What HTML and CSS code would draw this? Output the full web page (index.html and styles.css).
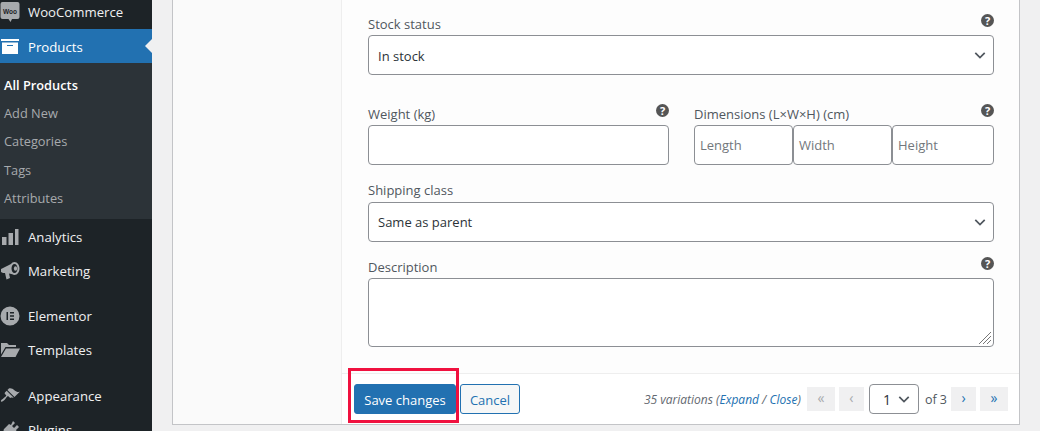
FILE: index.html
```html
<!DOCTYPE html>
<html lang="en">
<head>
    <meta charset="UTF-8">
    <title>Edit product</title>
    <link rel="stylesheet" href="styles.css">
</head>
<body>
    <nav class="sidebar">
        <a class="menu-item woo">
            <svg class="menu-icon" viewBox="0 0 20 20"><path fill="#a7aaad" d="M2.500 0h15a2 2 0 0 1 2 2v13a2 2 0 0 1-2 2H12l-1.500 3-2-3h-6a2 2 0 0 1-2-2V2a2 2 0 0 1 2-2z"/><text class="woo-mark" x="10" y="11.500">Woo</text></svg>
            <span>WooCommerce</span>
        </a>
        <a class="menu-item current">
            <svg class="menu-icon" viewBox="0 0 20 20"><path fill="#fff" fill-rule="evenodd" d="M1 2h18v2H1zM2 5.500h16V17H2zM7 8v1h6V8z"/></svg>
            <span>Products</span>
        </a>
        <ul class="submenu">
            <li class="active">All Products</li>
            <li>Add New</li>
            <li>Categories</li>
            <li>Tags</li>
            <li>Attributes</li>
        </ul>
        <a class="menu-item">
            <svg class="menu-icon" viewBox="0 0 20 20"><path fill="#a7aaad" d="M2 10h4.500v8H2zM8.500 6H13v12H8.500zM15 2h3.500v16H15z"/></svg>
            <span>Analytics</span>
        </a>
        <a class="menu-item">
            <svg class="menu-icon" viewBox="0 0 20 20"><path fill="#a7aaad" fill-rule="evenodd" d="M1 8l10-5c.8-1.300 2-2 3.500-2C17.500 1 19.500 4 19.500 7.500S17.500 14 14.500 14c-.8 0-1.600-.2-2.200-.7L9 12.500l1 4.500-3.500 1.500L5 12H3l-2-1zM14.500 3c-1.700 0-3 2-3 4.500S12.800 12 14.500 12s3-2 3-4.500S16.200 3 14.500 3z"/><ellipse cx="15.500" cy="7.500" rx="1.600" ry="2.200" fill="#a7aaad"/></svg>
            <span>Marketing</span>
        </a>
        <a class="menu-item gap">
            <svg class="menu-icon" viewBox="0 0 20 20"><path fill="#a7aaad" fill-rule="evenodd" d="M10 .5a9.500 9.500 0 1 1 0 19 9.500 9.500 0 0 1 0-19zM6.500 6v8H8V6zm3.500 0v1.500h4V6zm0 3.250v1.500h4v-1.500zm0 3.250V14h4v-1.500z"/></svg>
            <span>Elementor</span>
        </a>
        <a class="menu-item">
            <svg class="menu-icon" viewBox="0 0 20 20"><path fill="#a7aaad" d="M1 3h6l2 2h7v2H5.500L1 14.500zM6 8.500h14L15.500 17H1z"/></svg>
            <span>Templates</span>
        </a>
        <a class="menu-item gap">
            <svg class="menu-icon" viewBox="0 0 20 20"><path fill="#a7aaad" d="M14.480 11.060L7.410 3.990l1.500-1.500c.5-.56 2.300-.47 3.510.32 1.210.8 1.430 1.280 2.910 2.100 1.180.64 2.450 1.260 4.450.85zm-.71.71L6.700 4.700 4.930 6.470c-.39.39-.39 1.020 0 1.410l1.060 1.060c.39.39.39 1.030 0 1.420-.6.6-1.430 1.110-2.210 1.690-.35.260-.7.530-1.010.84C1.430 13.230.4 14.750 1.100 15.450c.71.7 2.220-.33 3.560-1.670.31-.31.58-.66.85-1.020.57-.78 1.080-1.610 1.690-2.210.39-.39 1.020-.39 1.410 0l1.060 1.060c.39.39 1.020.39 1.410 0z"/></svg>
            <span>Appearance</span>
        </a>
        <a class="menu-item">
            <svg class="menu-icon" viewBox="0 0 20 20"><path fill="#a7aaad" d="M13 1l2 2-3 3 2 2 3-3 2 2-3 3 1 2-5 5c-2 1-4 0-5-1l-3 3-2-2 3-3c-1-1-2-3-1-5l5-5 2 1z"/></svg>
            <span>Plugins</span>
        </a>
    </nav>

    <main class="content">
        <section class="panel">
            <div class="tabs"></div>
            <div class="panel-main">
                <div class="variation">
                    <div class="field stock">
                        <div class="field-head"><label>Stock status</label><span class="help">?</span></div>
                        <div class="select-box"><span>In stock</span><svg class="chevron" viewBox="0 0 14 8"><path d="M1.500 1l5.500 5.500L12.500 1"/></svg></div>
                    </div>
                    <div class="field-row">
                        <div class="field">
                            <div class="field-head"><label>Weight (kg)</label><span class="help">?</span></div>
                            <div class="text-box"></div>
                        </div>
                        <div class="field">
                            <div class="field-head"><label>Dimensions (L×W×H) (cm)</label><span class="help">?</span></div>
                            <div class="dims">
                                <div class="text-box">Length</div>
                                <div class="text-box">Width</div>
                                <div class="text-box">Height</div>
                            </div>
                        </div>
                    </div>
                    <div class="field shipping">
                        <div class="field-head"><label>Shipping class</label></div>
                        <div class="select-box"><span>Same as parent</span><svg class="chevron" viewBox="0 0 14 8"><path d="M1.500 1l5.500 5.500L12.500 1"/></svg></div>
                    </div>
                    <div class="field description">
                        <div class="field-head"><label>Description</label><span class="help">?</span></div>
                        <div class="text-area">
                            <svg class="grip" viewBox="0 0 14 14"><path d="M1 13L13 1M5 13l8-8M9 13l4-4"/></svg>
                        </div>
                    </div>
                </div>
                <div class="toolbar">
                    <button class="btn-save">Save changes</button>
                    <button class="btn-cancel">Cancel</button>
                    <div class="paging">
                        <em class="count">35 variations (<a>Expand</a> / <a>Close</a>)</em>
                        <span class="page-btn off">«</span>
                        <span class="page-btn off narrow">‹</span>
                        <div class="page-select"><span>1</span><svg class="chevron" viewBox="0 0 14 8"><path d="M1.500 1l5.500 5.500L12.500 1"/></svg></div>
                        <span class="of">of 3</span>
                        <span class="page-btn narrow">›</span>
                        <span class="page-btn">»</span>
                    </div>
                </div>
            </div>
        </section>
    </main>
    <div class="highlight"></div>
</body>
</html>
```

FILE: styles.css
```css
* {
    box-sizing: border-box;
}
html, body {
    height: 431px;
    overflow: hidden;
}
body {
    margin: 0;
    display: flex;
    background: #f0f0f1;
    color: #50575e;
    font-family: "Open Sans", sans-serif;
    font-size: 13px;
    position: relative;
}

/* sidebar */
.sidebar {
    width: 152px;
    flex: none;
    height: 431px;
    overflow: hidden;
    background: #1d2327;
    color: #f0f0f1;
}
.menu-item {
    display: flex;
    align-items: center;
    height: 34px;
    padding-top: 1px;
    font-size: 13.200px;
    position: relative;
}
.menu-item.woo {
    height: 29px;
    padding: 0 0 5px;
}
.menu-item.gap {
    margin-top: 11px;
}
.menu-item.gap:nth-last-child(2) {
    margin-top: 12px;
}
.menu-icon {
    width: 20px;
    height: 20px;
    margin-right: 8px;
    flex: none;
}
.woo-mark {
    font-family: "Liberation Sans", sans-serif;
    font-size: 6.500px;
    font-weight: 700;
    fill: #1d2327;
    text-anchor: middle;
}
.menu-item.current {
    background: #2271b1;
    color: #fff;
}
.menu-item.current::after {
    content: "";
    position: absolute;
    right: 0;
    top: 10px;
    border: 7px solid transparent;
    border-right-color: #f0f0f1;
    border-left: 0;
}
.submenu {
    list-style: none;
    margin: 0 0 1px;
    padding: 8px 0 7px 4px;
    background: #2c3338;
    color: #a7aaad;
    font-size: 12.800px;
}
.submenu li {
    height: 28.200px;
    line-height: 28px;
}
.submenu .active {
    color: #fff;
    font-weight: 600;
}

/* panel */
.content {
    flex: 1;
    padding: 0 20px;
}
.panel {
    display: flex;
    width: 848px;
    height: 425px;
    background: #fff;
    border: 1px solid #c3c4c7;
    border-top: 0;
}
.tabs {
    width: 169px;
    flex: none;
    background: #fafafa;
    border-right: 1px solid #eee;
}
.panel-main {
    flex: 1;
}
.variation {
    height: 374px;
    padding: 13px 25px 0 26px;
    background: #fdfdfd;
    border-bottom: 1px solid #eee;
}
.field-head {
    display: flex;
    justify-content: space-between;
    height: 22px;
    line-height: 22px;
}
.help {
    width: 13px;
    height: 13px;
    margin: 1px 0 0 0;
    border-radius: 50%;
    background: #555;
    color: #fff;
    font-size: 11px;
    font-weight: 700;
    line-height: 13px;
    text-align: center;
}
.select-box,
.text-box,
.text-area,
.page-select {
    border: 1px solid #8c8f94;
    border-radius: 4px;
    background: #fff;
    position: relative;
}
.select-box {
    display: flex;
    align-items: center;
    justify-content: space-between;
    height: 40px;
    padding: 0 7px 0 9px;
    color: #2c3338;
}
.stock .select-box {
    padding-top: 1px;
}
.chevron {
    width: 12px;
    height: 7px;
    fill: none;
    stroke: #50575e;
    stroke-width: 2;
}
.field-row {
    display: flex;
    gap: 25px;
    margin-top: 28px;
}
.field-row > .field {
    flex: none;
    width: 301px;
}
.field-row > .field:last-child {
    width: 300px;
}
.field-row .text-box {
    height: 40px;
}
.dims {
    display: flex;
}
.dims .text-box {
    width: 99px;
    color: #72777c;
    padding: 0 5px;
    line-height: 38px;
}
.dims .text-box:last-child {
    width: 102px;
}
.shipping {
    margin-top: 15px;
}
.shipping .field-head {
    line-height: 20px;
}
.description {
    margin-top: 14px;
}
.text-area {
    height: 69px;
}
.grip {
    position: absolute;
    right: 1px;
    bottom: 1px;
    width: 14px;
    height: 14px;
    fill: none;
    stroke: #777;
    stroke-width: 1;
}

/* footer bar */
.toolbar {
    display: flex;
    align-items: center;
    height: 50px;
    padding: 0 11px 0 12px;
}
.btn-save,
.btn-cancel {
    height: 30px;
    border-radius: 3px;
    font-family: inherit;
    font-size: 13px;
    padding: 2px 0 0;
    white-space: nowrap;
}
.btn-save {
    width: 102px;
    background: #2271b1;
    border: 1px solid #2271b1;
    color: #fff;
}
.btn-cancel {
    width: 60px;
    margin-left: 4px;
    background: #f6f7f7;
    border: 1px solid #2271b1;
    color: #2271b1;
}
.paging {
    margin-left: auto;
    display: flex;
    align-items: center;
    gap: 4px;
}
.count {
    font-size: 12px;
    color: #646970;
    margin-right: 2px;
}
.count a {
    color: #2271b1;
}
.page-btn {
    width: 28px;
    height: 24px;
    background: #f0f0f1;
    color: #2271b1;
    text-align: center;
    line-height: 21px;
    font-size: 14px;
}
.page-btn.narrow {
    width: 25px;
}
.page-btn.off {
    color: #a7aaad;
}
.page-select {
    display: flex;
    align-items: center;
    justify-content: space-between;
    width: 50px;
    height: 30px;
    margin-left: 1px;
    padding: 0 8px 0 13px;
    font-size: 14px;
    color: #2c3338;
}
.of {
    font-size: 12.500px;
    margin-left: 2px;
}
.highlight {
    position: absolute;
    left: 348px;
    top: 368px;
    width: 111px;
    height: 55px;
    border: 3px solid #f0113f;
}
```
